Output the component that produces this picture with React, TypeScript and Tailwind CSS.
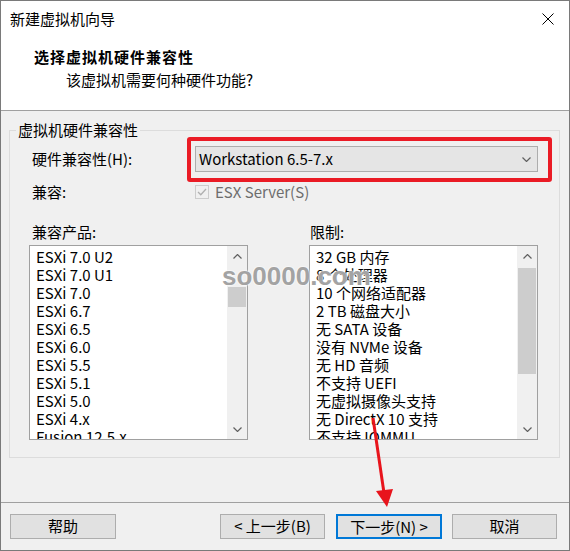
import React from "react";

const products = [
  "ESXi 7.0 U2",
  "ESXi 7.0 U1",
  "ESXi 7.0",
  "ESXi 6.7",
  "ESXi 6.5",
  "ESXi 6.0",
  "ESXi 5.5",
  "ESXi 5.1",
  "ESXi 5.0",
  "ESXi 4.x",
  "Fusion 12.5.x",
];

const limits = [
  "32 GB 内存",
  "8 个处理器",
  "10 个网络适配器",
  "2 TB 磁盘大小",
  "无 SATA 设备",
  "没有 NVMe 设备",
  "无 HD 音频",
  "不支持 UEFI",
  "无虚拟摄像头支持",
  "无 DirectX 10 支持",
  "不支持 IOMMU",
];

const font = "font-['Noto_Sans_CJK_SC','Noto_Sans',sans-serif]";

function Chevron({ up }: { up?: boolean }) {
  return (
    <svg width="9" height="5" viewBox="0 0 9 5">
      <polyline
        points={up ? "0.5,4.5 4.5,0.5 8.5,4.5" : "0.5,0.5 4.5,4.5 8.5,0.5"}
        fill="none"
        stroke="#606060"
        strokeWidth="1.2"
      />
    </svg>
  );
}

// list box with a fake win10 scrollbar
function ListBox({
  items,
  width,
  thumbTop,
  thumbHeight,
}: {
  items: string[];
  width: string;
  thumbTop: string;
  thumbHeight: string;
}) {
  return (
    <div className={`${width} h-[195px] border border-[#a0a0a0] bg-white flex`}>
      <div className="flex-1 overflow-hidden pl-[6px] pt-[2px]">
        {items.map((it) => (
          <div key={it} className="text-[15px] leading-[18px] text-black whitespace-nowrap">
            {it}
          </div>
        ))}
      </div>
      <div className="w-[20px] bg-[#f0f0f0] flex flex-col">
        <div className="h-[20px] flex items-center justify-center">
          <Chevron up />
        </div>
        <div className={`${thumbTop} ${thumbHeight} mx-[1px] bg-[#cdcdcd]`} />
        <div className="flex-1" />
        <div className="h-[20px] flex items-center justify-center">
          <Chevron />
        </div>
      </div>
    </div>
  );
}

export default function App() {
  return (
    <div className={`${font} relative w-[570px] h-[551px] border border-[#7a7a7a] flex flex-col text-black`}>
      {/* title bar */}
      <div className="h-[36px] bg-white flex items-center justify-between pl-[9px] pr-[15px]">
        <span className="text-[15px]">新建虚拟机向导</span>
        <svg width="12" height="12" viewBox="0 0 12 12">
          <path d="M0.5 0.5 L11.5 11.5 M11.5 0.5 L0.5 11.5" stroke="#000" strokeWidth="1" />
        </svg>
      </div>

      {/* header */}
      <div className="h-[74px] bg-white border-b border-[#a0a0a0] flex flex-col">
        <div className="mt-[10px] pl-[33px] text-[15px] leading-[20px] font-bold tracking-[1px]">
          选择虚拟机硬件兼容性
        </div>
        <div className="mt-[3px] pl-[65px] text-[15px] leading-[20px]">
          该虚拟机需要何种硬件功能?
        </div>
      </div>

      {/* body */}
      <div className="flex-1 bg-[#f0f0f0] flex flex-col">
        <fieldset className="mt-[9px] ml-[8px] w-[551px] h-[338px] border border-[#dcdcdc]">
          <legend className="ml-[6px] px-[2px] text-[15px] leading-[20px]">虚拟机硬件兼容性</legend>

          <div className="pl-[19px]">
            <div className="mt-[6px] flex items-center">
              <div className="w-[166px] pl-[3px] text-[15px]">硬件兼容性(H):</div>
              <div className="relative w-[343px] h-[26px] bg-[#e5e5e5] border border-[#adadad] flex items-center justify-between pl-[3px] pr-[6px]">
                <span className="text-[15px]">Workstation 6.5-7.x</span>
                <Chevron />
                <div className="absolute -left-[9px] -right-[15px] -top-[10px] -bottom-[11px] border-4 border-[#ea1b25] rounded-[3px]" />
              </div>
            </div>

            <div className="mt-[10px] h-[20px] flex items-center">
              <div className="w-[166px] pl-[3px] text-[15px]">兼容:</div>
              <div className="w-[14px] h-[14px] border border-[#cccccc] bg-[#f0f0f0] flex items-center justify-center">
                <svg width="10" height="8" viewBox="0 0 10 8">
                  <polyline points="1,4 3.8,6.8 9,1" fill="none" stroke="#b0b0b0" strokeWidth="1.3" />
                </svg>
              </div>
              <span className="ml-[6px] text-[15px] text-[#6d6d6d]">ESX Server(S)</span>
            </div>

            <div className="mt-[20px] h-[20px] flex items-center text-[15px]">
              <div className="w-[280px] pl-[3px]">兼容产品:</div>
              <div className="pl-[1px]">限制:</div>
            </div>

            <div className="mt-[3px] flex">
              <ListBox items={products} width="w-[219px]" thumbTop="mt-[21px]" thumbHeight="h-[20px]" />
              <div className="ml-[61px]">
                <ListBox items={limits} width="w-[229px]" thumbTop="mt-[2px]" thumbHeight="h-[106px]" />
              </div>
            </div>
          </div>
        </fieldset>

        <div className="mt-[44px] h-[1px] bg-[#a0a0a0]" />

        <div className="mt-[11px] flex text-[15px]">
          <button className="ml-[9px] w-[106px] h-[25px] bg-[#e1e1e1] border border-[#adadad]">帮助</button>
          <button className="ml-[104px] w-[105px] h-[25px] bg-[#e1e1e1] border border-[#adadad]">&lt; 上一步(B)</button>
          <button className="ml-[11px] w-[106px] h-[25px] bg-[#e1e1e1] border-2 border-[#0078d7]">下一步(N) &gt;</button>
          <button className="ml-[10px] w-[105px] h-[25px] bg-[#e1e1e1] border border-[#adadad]">取消</button>
        </div>
      </div>

      {/* watermark */}
      <div className="absolute left-[221px] top-[260px] text-[26px] leading-[30px] font-bold font-['Liberation_Sans',sans-serif] text-[#a3a3a3] [text-shadow:0_0_2px_#fff,0_0_2px_#fff]">
        so0000.com
      </div>

      {/* annotation arrow */}
      <svg className="absolute left-[360px] top-[410px]" width="40" height="100" viewBox="0 0 40 100">
        <line x1="12" y1="7" x2="23" y2="82" stroke="#e8141c" strokeWidth="3" />
        <polygon points="15,80 32,78 26,96" fill="#e8141c" />
      </svg>
    </div>
  );
}
